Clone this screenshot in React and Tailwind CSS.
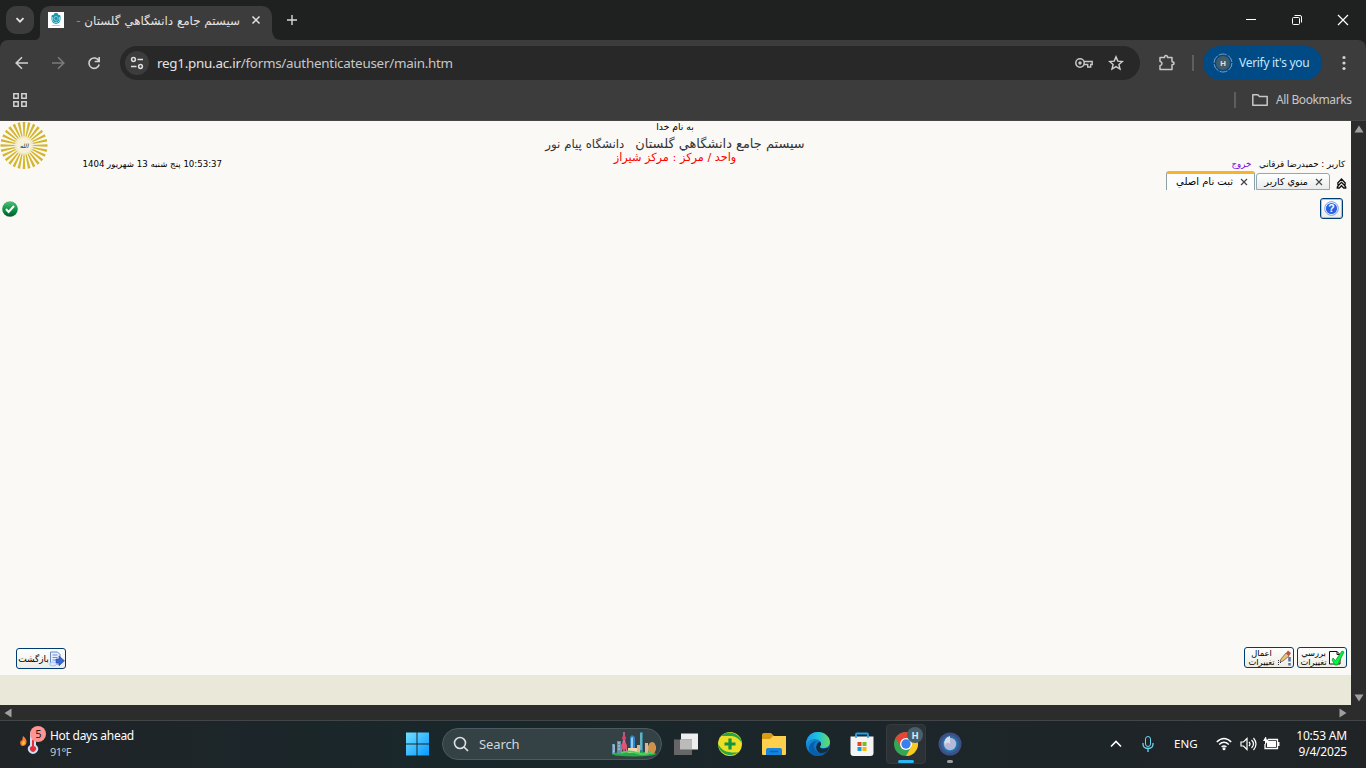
import React from 'react';

const Svg = ({ className = '', box = '0 0 24 24', children }) => (
  <svg viewBox={box} className={`block shrink-0 ${className}`} fill="none">{children}</svg>
);

function TabStrip() {
  return (
    <div className="flex h-[40px] shrink-0 bg-[#1f2120] text-[#e3e3e3]">
      <div className="ml-[6px] mt-[6px] flex h-[28px] w-[28px] items-center justify-center rounded-[10px] bg-[#3c3c3c]">
        <Svg box="0 0 12 12" className="h-[12px] w-[12px]"><path d="M2.500 4.200 6 7.700l3.500-3.500" stroke="#e3e3e3" strokeWidth="1.800" /></Svg>
      </div>
      <Svg box="0 0 6 6" className="mt-[34px] h-[6px] w-[6px]"><path d="M6 0v6H0Q6 6 6 0" fill="#3c3c3c" /></Svg>
      <div className="mt-[6px] flex h-[34px] w-[232px] items-start rounded-t-[10px] bg-[#3c3c3c] pl-[8px]">
        <Svg box="0 0 16 16" className="mt-[6px] h-[16px] w-[16px]">
          <path d="M0 0h16v16H0z" fill="#fff" />
          <path d="M6.500 1h3l.5 1.500 2.500 1v4.500l-1.500 3-3 1-3-1-1.500-3V3.500l2.500-1z" fill="#1696b0" />
          <path d="m6 5.500 2-1.500 2 1.500v2L8.500 9 6 7.500zM4.500 5v3.500l2 2h3l2-2V5" stroke="#b9e4eb" strokeWidth=".7" />
          <path d="M4 13.500h8" stroke="#85bfca" strokeWidth=".7" />
        </Svg>
        <div dir="rtl" className="ml-[12px] mt-[6px] h-[18px] w-[164px] whitespace-nowrap font-['DejaVu_Sans',sans-serif] text-[11.900px] leading-[18px]">سيستم جامع دانشگاهي گلستان <span className="text-[#8a8a8a]">-</span></div>
        <Svg box="0 0 10 10" className="ml-[11px] mt-[9px] h-[10px] w-[10px]"><path d="m1.500 1.500 7 7m0-7-7 7" stroke="#e3e3e3" strokeWidth="1.500" /></Svg>
      </div>
      <Svg box="0 0 10 10" className="mt-[30px] h-[10px] w-[10px]"><path d="M0 0v10h10Q0 10 0 0" fill="#3c3c3c" /></Svg>
      <Svg box="0 0 12 12" className="ml-[4px] mt-[14px] h-[12px] w-[12px]"><path d="M6 1v10M1 6h10" stroke="#d8d8d8" strokeWidth="1.400" /></Svg>
      <div className="ml-auto mr-[17px] mt-[14px] flex">
        <Svg box="0 0 12 12" className="mr-[34px] h-[12px] w-[12px]"><path d="M1 5.500h10" stroke="#fff" /></Svg>
        <Svg box="0 0 12 12" className="mr-[34px] h-[12px] w-[12px]"><rect x="1.500" y="3.500" width="7" height="7" rx="1" stroke="#fff" /><path d="M3.500 1.500H9q1.500 0 1.500 1.500v5.500" stroke="#fff" /></Svg>
        <Svg box="0 0 12 12" className="h-[12px] w-[12px]"><path d="m1 1 10 10m0-10L1 11" stroke="#fff" strokeWidth="1.200" /></Svg>
      </div>
    </div>
  );
}

function Toolbar() {
  return (
    <div className="shrink-0 bg-[#1f2120]">
      <div className="h-[81px] rounded-t-[8px] border-b border-[#464646] bg-[#3c3c3c] pt-[6px]">
        <div className="flex h-[34px] items-center">
          <Svg box="0 0 14 14" className="ml-[15px] h-[14px] w-[14px]"><path d="M13 7H1.500M7 1.200 1.200 7 7 12.800" stroke="#d1d1d1" strokeWidth="1.600" /></Svg>
          <Svg box="0 0 14 14" className="ml-[22px] h-[14px] w-[14px]"><path d="M1 7h11.500M7 1.200 12.800 7 7 12.800" stroke="#7b7b7b" strokeWidth="1.600" /></Svg>
          <Svg box="0 0 14 14" className="ml-[22px] h-[14px] w-[14px]"><path d="M11.800 4.800A5.200 5.200 0 1 0 12.200 8.500M12.200 1v4.500H7.700" stroke="#d1d1d1" strokeWidth="1.600" /></Svg>
          <div className="ml-[19px] flex h-[34px] w-[1020px] items-center rounded-full bg-[#282828] pl-[5px] pr-[16px]">
            <div className="flex h-[24px] w-[24px] items-center justify-center rounded-full bg-[#3c3c3c]">
              <Svg box="0 0 14 14" className="h-[14px] w-[14px]"><path d="M7.500 3.500H13M1 10.500h5.500" stroke="#dedede" strokeWidth="1.500" /><circle cx="3.500" cy="3.500" r="1.900" stroke="#dedede" strokeWidth="1.500" /><circle cx="10.500" cy="10.500" r="1.900" stroke="#dedede" strokeWidth="1.500" /></Svg>
            </div>
            <span className="ml-[8px] whitespace-nowrap font-['Noto_Sans',sans-serif] text-[13.400px] leading-[20px] tracking-[-0.250px] text-[#e3e3e3]">reg1.pnu.ac.ir<span className="text-[#c7c7c7]">/forms/authenticateuser/main.htm</span></span>
            <Svg box="0 0 18 12" className="ml-auto h-[12px] w-[18px]"><circle cx="5" cy="6" r="4.200" stroke="#c7c7c7" strokeWidth="1.500" /><circle cx="5" cy="6" r="1.700" fill="#c7c7c7" /><path d="M9 4.500h8.200v3h-1.500V10h-3V7.500H9" stroke="#c7c7c7" strokeWidth="1.400" /></Svg>
            <Svg box="0 0 16 16" className="ml-[15px] h-[16px] w-[16px]"><path d="m8 1.900 1.800 4.200 4.600.4-3.500 3 1.100 4.500L8 11.600 4 14l1.100-4.500-3.500-3 4.600-.4z" stroke="#d1d1d1" strokeWidth="1.400" /></Svg>
          </div>
          <Svg box="0 0 18 18" className="ml-[18px] h-[18px] w-[18px]"><path d="M2 3.500h4.500Q6.500 1.500 8 1.500T9.500 3.500H14v4.300q2 0 2 1.500t-2 1.500v4.800H2v-3.800q2-.7 2-2.300T2 7.200z" stroke="#c7c7c7" strokeWidth="1.500" strokeLinejoin="round" /></Svg>
          <div className="ml-[16px] h-[16px] w-[2px] bg-[#5e5e5e]" />
          <div className="ml-[9px] flex h-[34px] w-[119px] items-center rounded-full bg-[#004a86] pl-[10px] text-[#c2e7ff]">
            <Svg box="0 0 20 20" className="h-[20px] w-[20px]"><circle cx="10" cy="10" r="9" stroke="#769fc2" strokeDasharray="8 1.425" /><circle cx="10" cy="10" r="7" fill="#455a64" /><text x="10" y="12.900" textAnchor="middle" fontSize="8" fontWeight="bold" fontFamily="Roboto" fill="#d5e4eb">H</text></Svg>
            <span className="ml-[6px] whitespace-nowrap font-['Noto_Sans',sans-serif] text-[12px] leading-[18px] tracking-[-0.300px]">Verify it's you</span>
          </div>
          <Svg box="0 0 4 16" className="ml-[20px] h-[16px] w-[4px]"><circle cx="2" cy="2.500" r="1.600" fill="#d1d1d1" /><circle cx="2" cy="8" r="1.600" fill="#d1d1d1" /><circle cx="2" cy="13.500" r="1.600" fill="#d1d1d1" /></Svg>
        </div>
        <div className="mt-[6px] flex h-[28px] items-center">
          <Svg box="0 0 14 14" className="ml-[13px] h-[14px] w-[14px]"><path d="M.8.8h4.400v4.400H.8zM8.800.8h4.400v4.400H8.800zM.8 8.800h4.400v4.400H.8zM8.800 8.800h4.400v4.400H8.800z" stroke="#d1d1d1" strokeWidth="1.500" /></Svg>
          <div className="ml-auto h-[16px] w-[2px] bg-[#5e5e5e]" />
          <Svg box="0 0 16 12" className="ml-[16px] h-[12px] w-[16px]"><path d="M.8.800h5L7.500 2.500h7.700v8.700H.8z" stroke="#c7c7c7" strokeWidth="1.500" strokeLinejoin="round" /></Svg>
          <span className="ml-[8px] mr-[14px] w-[76px] whitespace-nowrap font-['Noto_Sans',sans-serif] text-[12px] leading-[18px] tracking-[-0.400px] text-[#c7c7c7]">All Bookmarks</span>
        </div>
      </div>
    </div>
  );
}

const rays = Array.from({ length: 28 }, (_, i) => (i * 360) / 28);

function PageHeader() {
  return (
    <div className="grid h-[50px] grid-cols-[545px_260px_1fr] font-['DejaVu_Sans',sans-serif] text-black">
      <div className="flex">
        <Svg box="0 0 48 50" className="h-[50px] w-[48px]">
          {rays.map((a) => <path key={a} d="M23.500 17 22.700 1h2.600L24.500 17z" fill="#d5b52c" transform={`rotate(${a} 24 24.500)`} />)}
          <circle cx="24" cy="24.500" r="9.500" fill="#f4efd0" fillOpacity=".75" />
          <text x="24" y="27" textAnchor="middle" fontSize="6" fontStyle="italic" fill="#222" fontFamily="DejaVu Sans">الله</text>
        </Svg>
        <div dir="rtl" className="ml-[34px] mt-[36px] h-[14px] w-[140px] whitespace-nowrap text-[8.600px] leading-[14px]">10:53:37 پنج شنبه 13 شهريور 1404</div>
      </div>
      <div dir="rtl" className="flex flex-col items-center whitespace-nowrap">
        <div className="h-[14px] text-[9.200px] leading-[12px]">به نام خدا</div>
        <div className="flex h-[15px] items-baseline gap-[11px] leading-[17px] text-[#333]"><span className="text-[12.950px]">سيستم جامع دانشگاهي گلستان</span><span className="text-[11.800px]">دانشگاه پيام نور</span></div>
        <div className="h-[15px] text-[11.300px] leading-[15px] text-[#ff0000]">واحد / مرکز : مرکز شيراز</div>
      </div>
      <div dir="rtl" className="mr-[6px] mt-[36px] whitespace-nowrap text-[8.650px] leading-[14px]">کاربر : حميدرضا قرقاني <span className="mr-[5px] text-[#7100d8]">خروج</span></div>
    </div>
  );
}

const X = () => <Svg box="0 0 8 8" className="h-[8px] w-[8px]"><path d="m1 1 6 6m0-6L1 7" stroke="#444" strokeWidth="1.200" /></Svg>;

function Page() {
  return (
    <div className="flex h-[584px] w-[1351px] flex-col bg-[#faf9f5] font-['DejaVu_Sans',sans-serif]">
      <PageHeader />
      <div className="flex h-[19px] items-end justify-end pr-[4px]">
        <div className="mr-px flex h-[19px] w-[89px] items-center justify-end rounded-t-[3px] border-x border-t-[3px] border-x-[#8e9fa8] border-t-[#f6b42d] bg-[#fcfdfe] pr-[6px]">
          <span dir="rtl" className="mr-[7px] whitespace-nowrap text-[10px] leading-[14px]">ثبت نام اصلي</span><X />
        </div>
        <div className="mr-[6px] flex h-[17px] w-[74px] items-center justify-end rounded-t-[3px] border border-[#91a7b4] bg-gradient-to-b from-white to-[#e9ecec] pr-[6px]">
          <span dir="rtl" className="mr-[7px] whitespace-nowrap text-[9.600px] leading-[14px]">منوي کاربر</span><X />
        </div>
        <Svg box="0 0 11 12" className="mb-[1px] h-[12px] w-[11px]"><path d="M1.300 6.500 5.500 2l4.200 4.500M1.300 7.500h2L5.500 5.300l2.200 2.200h2M2.800 8 1.300 10v1h2l2.200-2.300L7.700 11h2v-1L8.200 8" stroke="#111" strokeWidth="1.300" /></Svg>
      </div>
      <div className="mt-[7px] flex h-[22px] items-center justify-between pl-[2px] pr-[8px]">
        <Svg box="0 0 16 16" className="mt-[2px] h-[16px] w-[16px]"><defs><linearGradient id="ok" x2="0" y2="1"><stop stopColor="#58bd78" /><stop offset=".55" stopColor="#079543" /><stop offset="1" stopColor="#07572c" /></linearGradient></defs><circle cx="8" cy="8" r="7.800" fill="url(#ok)" /><path d="m4 8 2.600 3 5.400-6" stroke="#fff" strokeWidth="2" /></Svg>
        <button className="flex h-[21px] w-[23px] items-center justify-center rounded-[3px] border border-[#003c74] bg-gradient-to-b from-white to-[#edece5] shadow-[inset_0_0_0_1px_#a8c3e4]">
          <Svg box="0 0 15 15" className="h-[15px] w-[15px]"><circle cx="7.500" cy="7.500" r="6.800" fill="#fff" stroke="#5a84d9" strokeWidth=".8" /><circle cx="7.500" cy="7.500" r="5.600" fill="#2a61e4" /><text x="7.500" y="11.200" textAnchor="middle" fill="#fff" fontSize="10.500" fontWeight="bold" fontFamily="Liberation Sans">?</text></Svg>
        </button>
      </div>
      <div className="mt-auto flex h-[28px] items-start pl-[16px] pr-[4px]">
        <button className="mt-px flex h-[21px] w-[50px] items-center rounded-[3px] border border-[#003c74] bg-gradient-to-b from-white to-[#edece5] pl-[1px]">
          <span dir="rtl" className="w-[31px] whitespace-nowrap text-[9px] leading-[14px]">بازگشت</span>
          <Svg box="0 0 16 16" className="h-[16px] w-[16px]"><path d="M1.500 1h7L11 3.500V13H1.500z" fill="#e7f0ff" stroke="#6689c8" /><path d="M3.500 4h5M3.500 6.500h5M3.500 9h4" stroke="#678ed5" /><path d="M7 8h3V5l5.500 4.800-5.500 5V12H7z" fill="#3968d6" stroke="#2348a3" strokeWidth=".6" /><ellipse cx="4" cy="13" rx="3.500" ry="2" fill="#dce8ff" stroke="#7499d8" strokeWidth=".5" /></Svg>
        </button>
        <button className="ml-auto flex h-[21px] w-[50px] items-center rounded-[3px] border border-[#003c74] bg-gradient-to-b from-white to-[#edece5] pl-[2px]">
          <span dir="rtl" className="flex w-[29px] flex-col items-center text-[8.300px] leading-[9px]"><span>اعمال</span><span>تغييرات</span></span>
          <Svg box="0 0 16 16" className="h-[16px] w-[16px]"><path d="m5 9 5-6 3 3-6 5-3 1z" fill="#f2bf70" stroke="#6b6255" strokeWidth=".8" /><path d="m10 3 2-2.500L15 3l-2 3z" fill="#c3524d" /><path d="M13.500 7v4.500M13.500 13v2.500" stroke="#506fa5" strokeWidth="2.500" /><path d="M2 10.500h2M2 12.500h4M2 14.500h2" stroke="#333" strokeDasharray="1 1" /></Svg>
        </button>
        <button className="ml-[3px] flex h-[21px] w-[50px] items-center rounded-[3px] border border-[#003c74] bg-gradient-to-b from-white to-[#edece5] pl-[1px]">
          <span dir="rtl" className="flex w-[29px] flex-col items-center text-[8.300px] leading-[9px]"><span>بررسي</span><span>تغييرات</span></span>
          <Svg box="0 0 17 17" className="h-[17px] w-[17px]"><path d="M1.500 2.500H9l3 3V15H1.500z" fill="#fff" stroke="#111" /><path d="M9 2.500v3h3" stroke="#111" /><path d="m5 9 2.500 2.500L14 2l2 1L9.500 16H7l-3-5z" fill="#00f83f" stroke="#118525" strokeWidth=".7" /></Svg>
        </button>
      </div>
      <div className="h-[30px] shrink-0 bg-[#eae8d8]" />
    </div>
  );
}

function Browser() {
  return (
    <>
      <div className="flex h-[584px] shrink-0">
        <Page />
        <div className="flex w-[15px] flex-col items-center justify-between bg-[#2c2c2c] pb-[3px] pt-[4px]">
          <Svg box="0 0 10 8" className="h-[8px] w-[10px]"><path d="m5 .5 4.500 7h-9z" fill="#9f9f9f" /></Svg>
          <Svg box="0 0 10 8" className="h-[8px] w-[10px]"><path d="m5 7.500 4.500-7h-9z" fill="#9f9f9f" /></Svg>
        </div>
      </div>
      <div className="flex h-[15px] shrink-0 items-center justify-between bg-[#2c2c2c] pl-[4px] pr-[19px]">
        <Svg box="0 0 8 10" className="h-[10px] w-[8px]"><path d="m.5 5 7-4.500v9z" fill="#9f9f9f" /></Svg>
        <Svg box="0 0 8 10" className="h-[10px] w-[8px]"><path d="m7.500 5-7-4.500v9z" fill="#9f9f9f" /></Svg>
      </div>
    </>
  );
}

function City() {
  return (
    <Svg box="0 0 46 26" className="h-[26px] w-[46px]">
      <ellipse cx="23" cy="23" rx="22" ry="2.500" fill="#23ad47" />
      <path d="M1 13h3v10H1zM6 10h4v13H6zM35 15h3v8h-3z" fill="#608eae" /><path d="M2 14h1v7H2M7 12h2M7 15h2M7 18h2" stroke="#d0d4d6" />
      <path d="M13 1v20M10 21l3-13 3 13" stroke="#d56992" strokeWidth="1.500" /><circle cx="13" cy="7" r="2" fill="#e23e70" /><circle cx="13" cy="15" r="3" fill="#e45271" />
      <path d="m19 6 2-2 3 2v16h-5z" fill="#2e83c9" /><path d="m20 7 2-1v14h-2z" fill="#9ac9eb" />
      <path d="M29 1h3v20h-3z" fill="#397e97" /><path d="M30 2v17" stroke="#9ce1dc" />
      <path d="M17 17h10v5H17z" fill="#edd7ae" /><path d="M26 14h3v8h-3M34 12h3v10h-3z" fill="#deb491" />
      <ellipse cx="41" cy="17" rx="4" ry="6" fill="#dda052" /><path d="M39 12v10M41 11v11M43 13v9" stroke="#a46b2c" strokeWidth=".5" />
      <path d="M10 22q8-3 16 0t15-1" stroke="#50cf5d" strokeWidth="2" />
    </Svg>
  );
}

function Taskbar() {
  return (
    <div className="flex h-[48px] shrink-0 items-center border-t border-[#414547] bg-gradient-to-r from-[#202427] via-[#18272b] via-35% to-[#202427] pb-[2px] font-['Noto_Sans',sans-serif] text-white">
      <Svg box="0 0 28 30" className="-mt-[6px] ml-[19px] h-[30px] w-[28px]">
        <path d="M4 10q4 3 3.500 6.500T3 20Q0 18 2 14l1 1z" fill="#ff7b2d" /><path d="M5 14q2 4-1 5-2-1 1-5" fill="#ffcd41" />
        <path d="M11 6h6v13q4 3 1 7-4 4-8 0-3-4 1-7z" fill="#c8e1f7" /><path d="M13 14h2v6q4 2 1 5-2 2-4 0-3-3 1-5z" fill="#e62d39" />
        <circle cx="19" cy="8" r="8" fill="#ff9490" /><text x="19.500" y="12" textAnchor="middle" fontSize="11" fontFamily="Noto Sans" fill="#1c1c1c">5</text>
      </Svg>
      <div className="ml-[3px] w-[355px] whitespace-nowrap">
        <div className="mt-[1px] text-[12px] leading-[16px] tracking-[-0.270px]">Hot days ahead</div>
        <div className="text-[11px] leading-[16px] tracking-[-0.500px] text-[#c9cbcc]">91°F</div>
      </div>
      <Svg box="0 0 24 24" className="h-[24px] w-[24px]"><defs><linearGradient id="win" x2="1" y2="1"><stop stopColor="#70dfff" /><stop offset="1" stopColor="#0799ff" /></linearGradient></defs><path d="M1 .5h10.500V11.500H1zM12.500.5H24v11H12.500zM1 12.500h10.500v11H1zM12.500 12.500H24v11H12.500z" fill="url(#win)" /></Svg>
      <div className="ml-[13px] flex h-[32px] w-[220px] items-center rounded-full border border-[#4d5a5e] bg-[#344145] pl-[10px] pr-[4px]">
        <Svg box="0 0 16 16" className="h-[16px] w-[16px]"><circle cx="7" cy="7" r="5.500" stroke="#dce0e1" strokeWidth="1.600" /><path d="m11 11 4 4" stroke="#dce0e1" strokeWidth="1.700" /></Svg>
        <span className="ml-[10px] text-[13px] leading-[20px] tracking-[-0.100px] text-[#d3d7d8]">Search</span>
        <div className="ml-auto"><City /></div>
      </div>
      <Svg box="0 0 25 24" className="ml-[12px] h-[24px] w-[25px]"><path d="M7 1.500h17v16H7z" fill="#eee" /><path d="M0 7.500h18V23H0z" fill="#666" /><path d="M6 7.500h12v10H6z" fill="#bbb" /></Svg>
      <Svg box="0 0 24 24" className="ml-[19px] h-[24px] w-[24px]"><circle cx="12" cy="12" r="12" fill="#ecdf25" /><path d="M3 4Q8-1 15 1q8 3 9 10-4-6-10-7Q8 4 3 4M21 20q-7 5-14 2Q0 18 0 12q5 8 11 8 5 1 10 0" fill="#24a64b" /><path d="M12 6.500v11M6.500 12h11" stroke="#139443" strokeWidth="3.200" /></Svg>
      <Svg box="0 0 24 24" className="ml-[20px] h-[24px] w-[24px]"><path d="M0 3q0-2 2-2h7l3 3v6H0z" fill="#d89c14" /><path d="M0 7h8l3-3h13v18q0 1-1 1H1q-1 0-1-1z" fill="#fcd04d" /><path d="M4 23v-5q0-2 2-2h12q2 0 2 2v5z" fill="#1584dc" /><path d="M8 19.500h8" stroke="#0864b9" strokeWidth="1.500" /></Svg>
      <Svg box="0 0 24 24" className="ml-[20px] h-[24px] w-[24px]">
        <defs><linearGradient id="edgeTop"><stop stopColor="#159bf0" /><stop offset=".5" stopColor="#20c4dc" /><stop offset="1" stopColor="#6adb5d" /></linearGradient><linearGradient id="edgeLow" x2="1" y2="1"><stop stopColor="#1ba2ed" /><stop offset="1" stopColor="#064b9c" /></linearGradient></defs>
        <circle cx="12" cy="12" r="12" fill="url(#edgeLow)" /><path d="M.5 9Q3 0 12 0c7 0 12 5 12 10 0 4-3 6-7 6-3 0-4-1-2-3 1-4-3-6-7-6-4 0-7 3-7.500 5z" fill="url(#edgeTop)" /><path d="M15 13c-3 3 1 5 7 3l1-1q-1 5-6 7c-7-1-9-8-4-12 2 0 2 1 2 3z" fill="#172b38" /><path d="M11 9q-5 3-2 9 3 5 11 2-4 4-11 4-7-3-6-9 2-6 8-6" fill="#075fae" />
      </Svg>
      <Svg box="0 0 24 24" className="ml-[20px] h-[24px] w-[24px]"><path d="M6 5.500V2.500Q6 1.500 7 1.500h10q1 0 1 1v3" stroke="#19a4f0" strokeWidth="1.800" /><path d="M.5 4.500h23V21q0 3-3 3h-17q-3 0-3-3z" fill="#f4f4f4" /><path d="M6 3v3M18 3v3" stroke="#19a4f0" strokeWidth="1.500" /><path d="M7.500 10h4v4h-4z" fill="#e74325" /><path d="M12.500 10h4v4h-4z" fill="#7fba20" /><path d="M7.500 15h4v4h-4z" fill="#139bdf" /><path d="M12.500 15h4v4h-4z" fill="#fbb900" /></Svg>
      <div className="ml-[12px] flex h-[40px] w-[40px] flex-col items-center justify-between rounded-[4px] border border-[#343b3e] bg-[#2b3134] pt-[2px]">
        <Svg box="0 0 29 29" className="ml-[4px] h-[29px] w-[29px]">
          <circle cx="12" cy="17" r="12" fill="#35a653" /><path d="M1.600 11A12 12 0 0 1 22.400 11H12z" fill="#e94435" /><path d="M12 11h10.400A12 12 0 0 1 12 29l5-9z" fill="#fbc920" /><path d="m1.600 11 5.200 9L12 17l-1-6z" fill="#e94435" /><circle cx="12" cy="17" r="6" fill="#fff" /><circle cx="12" cy="17" r="4.700" fill="#397fef" /><circle cx="21" cy="8" r="8" fill="#47606d" /><text x="21" y="11.500" textAnchor="middle" fontSize="9.500" fontWeight="bold" fontFamily="Roboto" fill="#e1e7ea">H</text>
        </Svg>
        <div className="h-[3px] w-[16px] rounded-full bg-[#29b6f3]" />
      </div>
      <div className="ml-[12px] flex h-[38px] flex-col items-center justify-between pt-[7px]">
        <Svg box="0 0 24 24" className="h-[24px] w-[24px]"><circle cx="12" cy="12" r="11.500" fill="#3d5085" /><circle cx="12" cy="12" r="8" fill="#1c80b8" stroke="#31659e" strokeWidth="2" /><circle cx="12" cy="12" r="6.200" fill="#b3b9d7" /><path d="M12 4v8q-3-3-5 1-2-7 5-9" fill="#dadde8" /></Svg>
        <div className="h-[3px] w-[6px] rounded-full bg-[#9a9da0]" />
      </div>
      <div className="ml-auto flex items-center">
        <Svg box="0 0 12 8" className="h-[8px] w-[12px]"><path d="m1 6.500 5-5 5 5" stroke="#fff" strokeWidth="1.600" /></Svg>
        <Svg box="0 0 12 18" className="ml-[20px] h-[18px] w-[12px]"><rect x="3.500" y="1.500" width="5" height="10" rx="2.500" stroke="#6bd6ee" /><path d="M1 8v1q0 4.500 5 4.500T11 9V8M6 14v3" stroke="#6bd6ee" strokeWidth="1.300" /></Svg>
        <span className="ml-[20px] w-[25px] text-[11.500px] leading-[18px]">ENG</span>
        <Svg box="0 0 16 14" className="ml-[17px] h-[14px] w-[16px]"><path d="M.8 5q7.200-7 14.400 0M3.200 7.500q4.800-4.500 9.600 0M5.600 10q2.400-2 4.800 0" stroke="#fff" strokeWidth="1.500" /><circle cx="8" cy="11.800" r="1.500" fill="#fff" /></Svg>
        <Svg box="0 0 17 14" className="ml-[8px] h-[14px] w-[17px]"><path d="M1 5h2.500L7 1.500v11L3.500 9H1zM9 5q2 2 0 4M11.500 3q4 4 0 8M13.500 1q5 6 0 12" stroke="#fff" strokeWidth="1.200" /></Svg>
        <Svg box="0 0 17 14" className="ml-[6px] h-[14px] w-[17px]"><path d="M5 2.500h9.500v9H2V7" stroke="#fff" strokeWidth="1.300" /><path d="M4 4h9v6H4z" fill="#fff" /><path d="M15 5h1.500v4H15zM3-1 0 4h2v4l4-5.500H3.500z" fill="#fff" /></Svg>
        <div className="ml-[12px] mr-[19px] w-[55px] whitespace-nowrap text-right text-[12px] leading-[16px] tracking-[-0.200px]"><div>10:53 AM</div><div>9/4/2025</div></div>
      </div>
    </div>
  );
}

export default function App() {
  return (
    <div className="flex h-[768px] w-[1366px] flex-col overflow-hidden">
      <TabStrip />
      <Toolbar />
      <Browser />
      <Taskbar />
    </div>
  );
}
